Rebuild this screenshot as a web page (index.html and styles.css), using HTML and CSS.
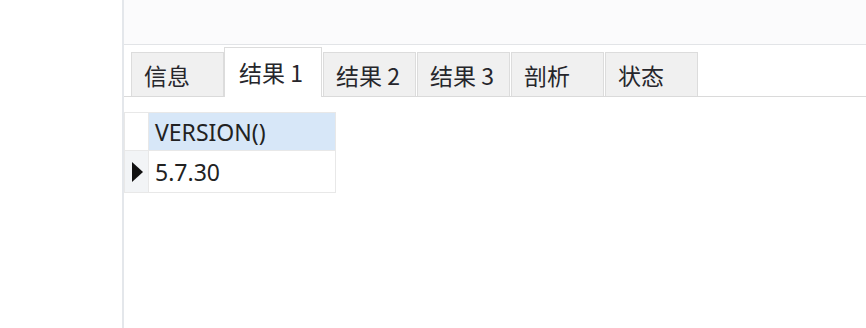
FILE: index.html
```html
<!DOCTYPE html>
<html lang="zh-CN">
<head>
    <meta charset="UTF-8">
    <title>结果 1</title>
    <link rel="stylesheet" href="styles.css">
</head>
<body>
    <div class="side"></div>

    <div class="main">
        <div class="top-area"></div>

        <!-- 结果标签页 -->
        <div class="tabs">
            <div class="tab">信息</div>
            <div class="tab active">结果 1</div>
            <div class="tab">结果 2</div>
            <div class="tab">结果 3</div>
            <div class="tab">剖析</div>
            <div class="tab">状态</div>
        </div>

        <!-- 结果表格 -->
        <table class="grid">
            <tr>
                <th class="row-head"></th>
                <th class="col-head">VERSION()</th>
            </tr>
            <tr>
                <td class="row-head current">
                    <svg width="12" height="20" viewBox="0 0 12 20"><path d="M1 0 L12 10 L1 20 Z" fill="#111"/></svg>
                </td>
                <td class="cell">5.7.30</td>
            </tr>
        </table>
    </div>
</body>
</html>
```

FILE: styles.css
```css
body {
    margin: 0;
    height: 328px;
    display: flex;
    background: #fff;
    font-family: "Noto Sans", "Noto Sans CJK SC", sans-serif;
    color: #222;
    overflow: hidden;
}

.side {
    width: 122px;
    flex: none;
    border-right: 2px solid #e4e7eb;
}

.main {
    flex: 1;
    display: flex;
    flex-direction: column;
}

.top-area {
    height: 44px;
    background: #fbfbfc;
    border-bottom: 1px solid #e2e4e7;
}

/* 标签栏 */
.tabs {
    display: flex;
    align-items: flex-end;
    height: 51px;
    padding-left: 7px;
    border-bottom: 1px solid #dadada;
}
.tab {
    height: 43px;
    min-width: 68px;
    padding: 0 11px 0 12px;
    margin-right: 1px;
    display: flex;
    align-items: center;
    background: #f0f0f0;
    border: 1px solid #dcdcdc;
    border-bottom: none;
    font-family: "Noto Sans CJK SC", sans-serif;
    font-size: 23px;
    color: #26262b;
}
.tab.active {
    height: 48px;
    padding: 0 14px 1px;
    margin-left: -1px;
    background: #fff;
    margin-bottom: -1px;
}

/* 表格 */
.grid {
    align-self: flex-start;
    margin-top: 15px;
    border-collapse: collapse;
    font-size: 23px;
}
.grid th,
.grid td {
    border: 1px solid #e8e8e8;
    padding: 0;
    text-align: left;
    font-weight: normal;
}
.row-head {
    width: 23px;
    background: #fff;
}
.row-head.current {
    background: #f2f4f6;
    text-align: center;
    line-height: 0;
}
.col-head {
    width: 174px;
    height: 37px;
    padding: 0 6px !important;
    background: #d7e7f8;
}
.cell {
    height: 41px;
    padding: 0 6px !important;
}
```
